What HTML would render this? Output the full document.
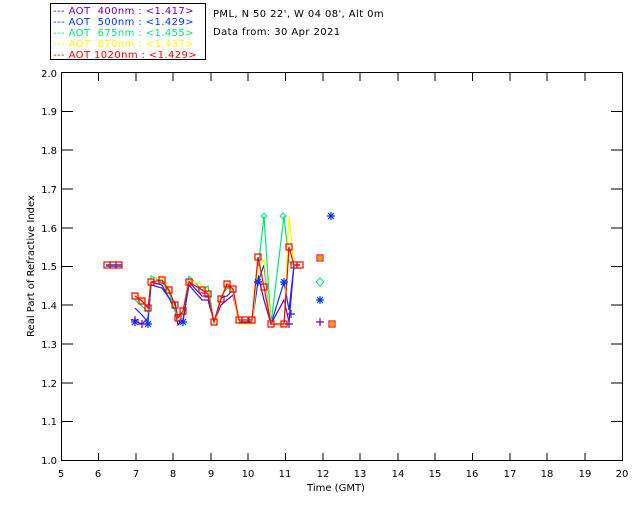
<!DOCTYPE html>
<html><head><style>
html,body{margin:0;padding:0;background:#fff;}
svg text{font-family:"DejaVu Sans","Liberation Sans",sans-serif;font-size:10px;white-space:pre;}
</style></head><body>
<svg width="640" height="512" xmlns="http://www.w3.org/2000/svg" xml:space="preserve">
<rect width="640" height="512" fill="#fff"/>
<rect x="50.5" y="3.5" width="155" height="56" fill="#fff" stroke="#000" stroke-width="1"/>
<g font-size="10" letter-spacing="0.4">
<text x="53" y="14" fill="#6a00b8">--- AOT  400nm : &lt;1.417&gt;</text>
<text x="53" y="25" fill="#0033ff">--- AOT  500nm : &lt;1.429&gt;</text>
<text x="53" y="36" fill="#00e676">--- AOT  675nm : &lt;1.455&gt;</text>
<text x="53" y="47" fill="#ffff00">--- AOT  870nm : &lt;1.437&gt;</text>
<text x="53" y="58" fill="#ff0000">--- AOT 1020nm : &lt;1.429&gt;</text>
<text x="213" y="17" fill="#000">PML, N 50 22', W 04 08', Alt 0m</text>
<text x="213" y="35" fill="#000">Data from: 30 Apr 2021</text>
</g>
<rect x="61.5" y="72.5" width="561" height="388" fill="none" stroke="#000"/>
<path stroke="#000" fill="none" d="M98.5 461v-8M98.5 73v8M136 461v-8M136 73v8M173 461v-8M173 73v8M211 461v-8M211 73v8M248 461v-8M248 73v8M285.5 461v-8M285.5 73v8M323 461v-8M323 73v8M360 461v-8M360 73v8M398 461v-8M398 73v8M435 461v-8M435 73v8M472.5 461v-8M472.5 73v8M510 461v-8M510 73v8M547 461v-8M547 73v8M585 461v-8M585 73v8
M62 111.5h11M622 111.5h-11M62 150h11M622 150h-11M62 189h11M622 189h-11M62 228h11M622 228h-11M62 266.5h11M622 266.5h-11M62 305h11M622 305h-11M62 344h11M622 344h-11M62 383h11M622 383h-11M62 421.5h11M622 421.5h-11"/>
<g fill="#000" text-anchor="end">
<text x="57" y="77">2.0</text><text x="57" y="115">1.9</text><text x="57" y="154">1.8</text><text x="57" y="193">1.7</text><text x="57" y="232">1.6</text><text x="57" y="270">1.5</text><text x="57" y="309">1.4</text><text x="57" y="348">1.3</text><text x="57" y="387">1.2</text><text x="57" y="425">1.1</text><text x="57" y="464">1.0</text>
</g>
<g fill="#000" text-anchor="middle">
<text x="61" y="477">5</text><text x="98" y="477">6</text><text x="136" y="477">7</text><text x="173" y="477">8</text><text x="211" y="477">9</text><text x="248" y="477">10</text><text x="285" y="477">11</text><text x="323" y="477">12</text><text x="360" y="477">13</text><text x="398" y="477">14</text><text x="435" y="477">15</text><text x="472" y="477">16</text><text x="510" y="477">17</text><text x="547" y="477">18</text><text x="585" y="477">19</text><text x="622" y="477">20</text>
<text x="336" y="491">Time (GMT)</text>
<text transform="translate(34,266) rotate(-90)">Real Part of Refractive Index</text>
</g>
<g fill="none" stroke-width="1.2">
<polyline stroke="#6a00b8" points="135,321 142,324 148,318 151,282 162,285 169,298 175,310 178,325 183,320 189,285 202,300 208,300 214,322 221,305 227,300 233,295 239,322 245,322 252,322 258,275 264,300 271,324 284,300 289,322 294,265 300,265"/>
<polyline stroke="#0033ff" points="135,308 142,315 148,322 151,285 162,288 169,298 175,302 178,320 183,322 189,282 202,296 208,296 214,322 221,298 227,296 233,290 239,322 245,322 252,322 258,282 264,265 271,324 284,282 289,310 294,265 300,265"/>
<polyline stroke="#00e676" points="135,300 142,306 148,312 151,276 162,282 169,292 175,312 178,315 183,312 189,276 202,290 208,286 214,322 221,296 227,288 233,290 239,320 245,320 252,320 258,270 264,216 271,324 284,216 289,262 294,265 300,265"/>
<polyline stroke="#ffff00" points="135,292 142,298 148,308 151,280 162,276 169,288 175,306 178,320 183,312 189,280 202,285 208,292 214,324 221,298 227,282 233,292 239,324 245,324 252,324 258,268 264,260 271,324 284,326 289,216 294,265 300,265"/>
<polyline stroke="#ff0000" points="135,296 142,301 148,308 151,282 162,280 169,290 175,305 178,318 183,311 189,282 202,290 208,294 214,322 221,299 227,284 233,289 239,320 245,320 252,320 258,257 264,287 271,324 284,324 289,247 294,265 300,265"/>
</g>
<g fill="#3b6ee0">
<rect x="106" y="264" width="16" height="3"/>
</g>
<g fill="none" stroke="#ff0000" stroke-width="1.2">
<rect x="104" y="262" width="6" height="6"/><rect x="110" y="262" width="6" height="6"/><rect x="116" y="262" width="6" height="6"/>
<rect x="132" y="293" width="6" height="6"/><rect x="139" y="298" width="6" height="6"/><rect x="145" y="305" width="6" height="6"/><rect x="148" y="279" width="6" height="6"/><rect x="159" y="277" width="6" height="6"/><rect x="166" y="287" width="6" height="6"/><rect x="172" y="302" width="6" height="6"/><rect x="175" y="315" width="6" height="6"/><rect x="180" y="308" width="6" height="6"/><rect x="186" y="279" width="6" height="6"/><rect x="199" y="287" width="6" height="6"/><rect x="205" y="291" width="6" height="6"/><rect x="211" y="319" width="6" height="6"/><rect x="218" y="296" width="6" height="6"/><rect x="224" y="281" width="6" height="6"/><rect x="230" y="286" width="6" height="6"/><rect x="236" y="317" width="6" height="6"/><rect x="242" y="317" width="6" height="6"/><rect x="249" y="317" width="6" height="6"/><rect x="255" y="254" width="6" height="6"/><rect x="261" y="284" width="6" height="6"/><rect x="268" y="321" width="6" height="6"/><rect x="281" y="321" width="6" height="6"/><rect x="286" y="244" width="6" height="6"/><rect x="291" y="262" width="6" height="6"/><rect x="297" y="262" width="6" height="6"/><rect x="317" y="255" width="6" height="6"/><rect x="329" y="321" width="6" height="6"/>
</g>
<g fill="#c8b400"><rect x="318" y="256" width="4" height="4"/><rect x="330" y="322" width="4" height="4"/></g>
<g stroke="#0033ff" stroke-width="1.2">
<path d="M331 212v8M327 216h8M328 213l6 6M334 213l-6 6"/>
<path d="M320 296v8M316 300h8M317 297l6 6M323 297l-6 6"/>
<path d="M135 318v8M131 322h8M132 319l6 6M138 319l-6 6M148 320v8M144 324h8M145 321l6 6M151 321l-6 6M183 318v8M179 322h8M180 319l6 6M186 319l-6 6M258 278v8M254 282h8M255 279l6 6M261 279l-6 6M284 278v8M280 282h8M281 279l6 6M287 279l-6 6M291 310v8M287 314h8"/>
</g>
<g stroke="#6a00b8" stroke-width="1.2"><path d="M320 318v8M316 322h8M135 316v8M131 320h8M142 320v8M138 324h8M289 320v8M285 324h8"/></g>
<path d="M320 278l4 4-4 4-4-4z" fill="none" stroke="#00e676"/>
<path d="M264 213l3 3-3 3-3-3zM283 213l3 3-3 3-3-3z" fill="none" stroke="#00e676"/>
</svg>
</body></html>
